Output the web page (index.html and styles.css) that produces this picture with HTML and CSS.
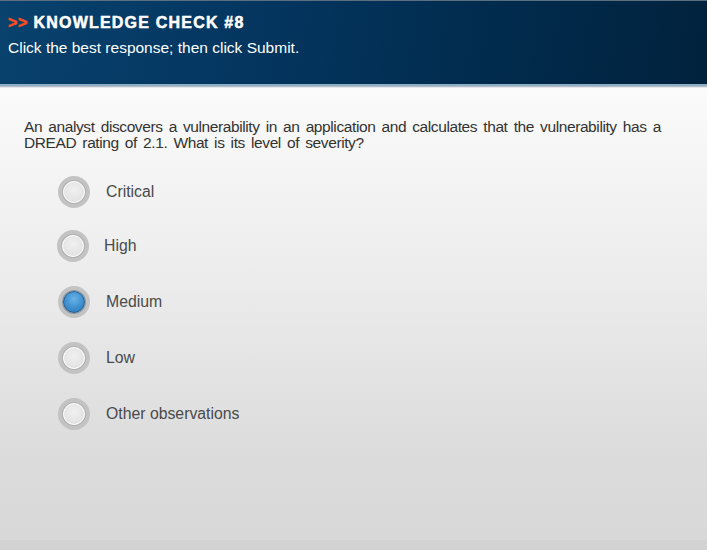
FILE: index.html
```html
<!DOCTYPE html>
<html>
<head>
<meta charset="utf-8">
<link rel="stylesheet" href="styles.css">
</head>
<body>
<div class="page">
  <header class="header">
    <h1 class="title"><span class="arrows">&gt;&gt;</span> KNOWLEDGE CHECK #8</h1>
    <p class="instructions">Click the best response; then click Submit.</p>
  </header>
  <main class="content">
    <p class="question">An analyst discovers a vulnerability in an application and calculates that the vulnerability has a DREAD rating of 2.1. What is its level of severity?</p>
    <ul class="options">
      <li class="option"><span class="radio"></span><span class="label">Critical</span></li>
      <li class="option option-shift"><span class="radio"></span><span class="label">High</span></li>
      <li class="option"><span class="radio selected"></span><span class="label">Medium</span></li>
      <li class="option"><span class="radio"></span><span class="label">Low</span></li>
      <li class="option"><span class="radio"></span><span class="label">Other observations</span></li>
    </ul>
  </main>
  <div class="footer-band"></div>
</div>
</body>
</html>
```
FILE: styles.css
```css
html, body {
  margin: 0;
  padding: 0;
}
body {
  width: 707px;
  height: 550px;
  overflow: hidden;
  font-family: "Liberation Sans", Arial, sans-serif;
}
.page {
  display: flex;
  flex-direction: column;
  height: 550px;
  background: linear-gradient(to bottom, #ffffff 0px, #fafafa 100px, #ececec 280px, #dcdcdc 450px, #d8d8d8 540px);
}
.header {
  height: 83px;
  border-top: 1px solid #5a6f80;
  background: linear-gradient(100deg, #08426d 0%, #043660 35%, #012b4d 70%, #01223d 100%);
  border-bottom: 2px solid #8eaec6;
  box-shadow: 0 1px 0 #b5bec6, 0 2px 0 #e4e8ec;
  box-sizing: content-box;
}
.title {
  margin: 0;
  padding: 13px 0 0 8px;
  font-size: 16px;
  line-height: 18px;
  font-weight: bold;
  color: #ffffff;
  letter-spacing: 1.2px;
  -webkit-text-stroke: 0.5px #ffffff;
}
.arrows {
  color: #ff4d1f;
  letter-spacing: 0.6px;
  -webkit-text-stroke: 0.5px #ff4d1f;
}
.instructions {
  margin: 0;
  padding: 7px 0 0 8px;
  font-size: 15.5px;
  line-height: 18px;
  color: #ffffff;
}
.content {
  flex: 1;
  padding: 33px 24px 0 24px;
}
.question {
  margin: 0;
  font-size: 15.5px;
  line-height: 16px;
  color: #333333;
  letter-spacing: -0.4px;
  word-spacing: 2.2px;
}
.options {
  list-style: none;
  margin: 0;
  padding: 24px 0 0 34px;
  display: flex;
  flex-direction: column;
  gap: 22px;
}
.option {
  display: flex;
  align-items: center;
  height: 34px;
  gap: 16px;
}
.option-shift {
  margin-left: -1px;
  margin-top: -2px;
}
.option-shift .label {
  margin-left: -1px;
}
.radio {
  width: 32px;
  height: 32px;
  border-radius: 50%;
  background: #c3c3c3;
  display: flex;
  align-items: center;
  justify-content: center;
  flex: none;
}
.radio::after {
  content: "";
  width: 22px;
  height: 22px;
  border-radius: 50%;
  box-sizing: border-box;
  border: 1px solid #ffffff;
  background: radial-gradient(circle at 50% 40%, #f0f0f0 0%, #dedede 100%);
  box-shadow: 0 0 0 1px #b0b0b0;
}
.radio.selected::after {
  border: 1px solid #2a5d8a;
  box-shadow: 0 0 0 1px #8a9aa8;
  background: radial-gradient(circle at 50% 35%, #6ab4e6 0%, #3d8fcf 55%, #2a74b3 100%);
}
.label {
  font-size: 15.8px;
  color: #4a4a4a;
}
.footer-band {
  height: 10px;
  background: #d3d3d3;
}
```
